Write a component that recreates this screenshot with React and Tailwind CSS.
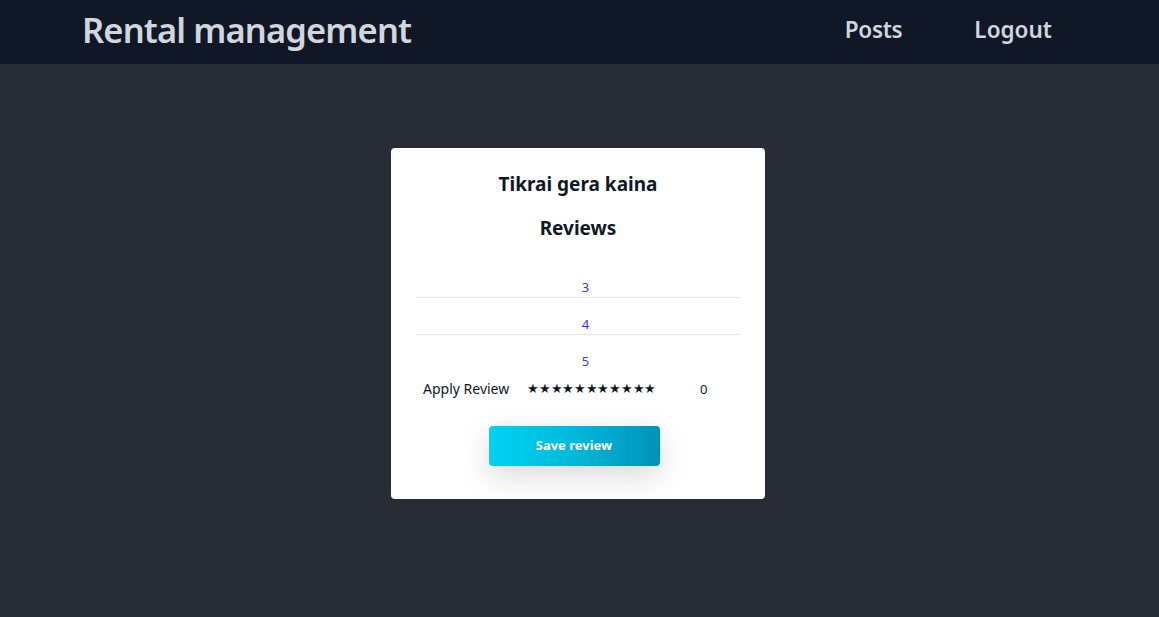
import React, { useState } from "react";

function Navbar() {
  return (
    <nav className="bg-gray-900 h-16 flex items-center justify-between pl-[82px] pr-[107px] pb-[5px]">
      <h1 className="text-[34.5px] font-semibold text-gray-300 tracking-tight">Rental management</h1>
      <ul className="flex items-center gap-[72px] text-[22.5px] font-semibold text-gray-300">
        <li><a href="#" className="tracking-[-0.3px]">Posts</a></li>
        <li><a href="#">Logout</a></li>
      </ul>
    </nav>
  );
}

function App() {
  const [rating] = useState(0);
  const reviews = [3, 4, 5];

  return (
    <div
      className="min-h-screen bg-[#282c34]"
      style={{ fontFamily: '"Noto Sans", "Open Sans", sans-serif' }}
    >
      <Navbar />
      <div className="flex justify-center pr-[3px]">
        <div className="mt-[84px] w-[374px] bg-white rounded-[4px] px-[25px] pt-[22px] pb-[33px]">
          <h2 className="text-center text-[19px] font-bold text-gray-900 leading-7">Tikrai gera kaina</h2>
          <h3 className="text-center text-[19px] font-bold text-gray-900 leading-7 mt-4">Reviews</h3>
          <ul className="mt-[19px]">
            {reviews.map((r, i) => (
              <li
                key={i}
                className={`pt-[16px] pl-[15px] text-center text-[13px] leading-5 text-[#3535f5] ${i < reviews.length - 1 ? "border-b border-gray-200" : ""}`}
              >
                {r}
              </li>
            ))}
          </ul>
          <div className="flex items-center mt-[8px] text-[14px] leading-5 text-gray-900">
            <span className="ml-[7px]">Apply Review</span>
            <span className="ml-[18px] text-[12.5px] tracking-[-0.3px]">★★★★★★★★★★★</span>
            <span className="ml-[44px] text-[13px]">{rating}</span>
          </div>
          <div className="flex justify-center mt-[27px]">
            <button className="w-[171px] h-10 rounded-[4px] bg-gradient-to-r from-cyan-400 via-cyan-500 to-cyan-600 text-white text-[13px] font-bold shadow-[0_10px_30px_rgba(0,0,0,0.15)] mr-[8px]">
              Save review
            </button>
          </div>
        </div>
      </div>
    </div>
  );
}

export default App;
